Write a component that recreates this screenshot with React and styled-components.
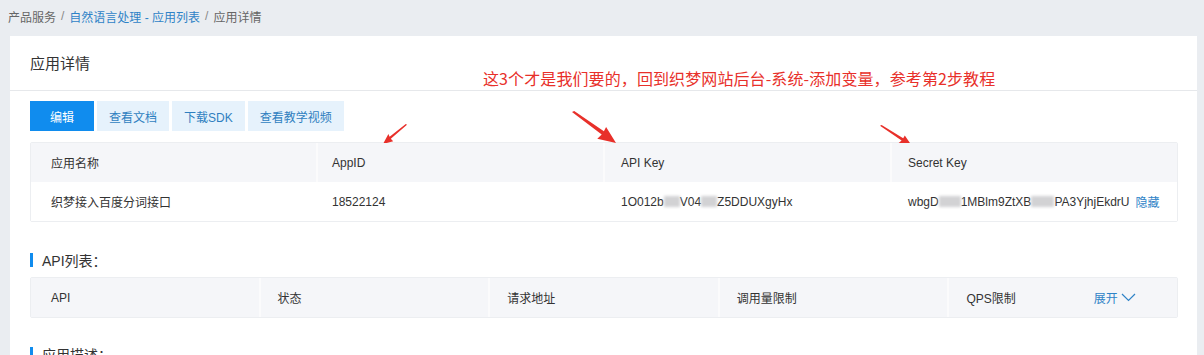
import React from "react";
import styled, { createGlobalStyle } from "styled-components";

const GlobalStyle = createGlobalStyle`
  html, body {
    margin: 0;
    padding: 0;
    background-color: #eaedf1;
    font-family: "Liberation Sans", "Noto Sans CJK SC", sans-serif;
    color: #333;
    overflow: hidden;
  }
  * {
    box-sizing: border-box;
  }
`;

const apiCols = ["API", "状态", "请求地址", "调用量限制", "QPS限制"];

export default function App() {
  return (
    <Page>
      <GlobalStyle />
      <Breadcrumb>
        <Crumb>产品服务</Crumb>
        <Sep>/</Sep>
        <CrumbLink>自然语言处理 - 应用列表</CrumbLink>
        <Sep>/</Sep>
        <Crumb>应用详情</Crumb>
      </Breadcrumb>
      <Card>
        <CardHeader>
          <CardTitle>应用详情</CardTitle>
        </CardHeader>
        <Note>这3个才是我们要的，回到织梦网站后台-系统-添加变量，参考第2步教程</Note>
        <Arrow $left={383} $top={124} $flip>
          <ArrowShape />
        </Arrow>
        <Arrow $left={572} $top={111} $w={44} $h={32}>
          <ArrowShape />
        </Arrow>
        <Arrow $left={880} $top={125} $w={32} $h={21}>
          <ArrowShape />
        </Arrow>
        <CardBody>
          <Toolbar>
            <Button $primary>编辑</Button>
            <Button>查看文档</Button>
            <Button>下载SDK</Button>
            <Button>查看教学视频</Button>
          </Toolbar>
          <InfoTable>
            <HeadRow $cols={4}>
              <HeadCell $pad={20}>应用名称</HeadCell>
              <HeadCell $pad={14}>AppID</HeadCell>
              <HeadCell $pad={16}>API Key</HeadCell>
              <HeadCell $pad={16}>Secret Key</HeadCell>
            </HeadRow>
            <DataRow $cols={4}>
              <DataCell $pad={20}>织梦接入百度分词接口</DataCell>
              <DataCell $pad={14}>18522124</DataCell>
              <DataCell $pad={16}>
                1O012b<Blur $w={16} />V04<Blur $w={16} />Z5DDUXgyHx
              </DataCell>
              <DataCell $pad={16}>
                wbgD<Blur $w={22} />1MBlm9ZtXB<Blur $w={23} />PA3YjhjEkdrU
                <TextLink>隐藏</TextLink>
              </DataCell>
            </DataRow>
          </InfoTable>
          <SectionTitle>API列表：</SectionTitle>
          <ApiTable>
            <HeadRow $cols={5}>
              {apiCols.map((c, i) => (
                <HeadCell key={c} $pad={i === 0 ? 20 : 17}>
                  {c}
                  {i === 4 && (
                    <Expand>
                      展开
                      <svg width="15" height="9" viewBox="0 0 15 9">
                        <path
                          d="M1 1 L7.5 7.5 L14 1"
                          fill="none"
                          stroke="#2f83c7"
                          strokeWidth="1.2"
                        />
                      </svg>
                    </Expand>
                  )}
                </HeadCell>
              ))}
            </HeadRow>
          </ApiTable>
          <SectionTitle $top={26}>应用描述：</SectionTitle>
          <Desc>织梦接入百度分词接口</Desc>
        </CardBody>
      </Card>
    </Page>
  );
}

function ArrowShape() {
  return (
    <svg width="100%" height="100%" viewBox="0 0 40 30" preserveAspectRatio="none">
      <polygon points="0,1 2,0 29,19 31,15 40,30 23,26 27,22" fill="#e8302a" />
    </svg>
  );
}

const Page = styled.div`
  width: 1204px;
  min-height: 355px;
  padding: 0 7px 0 10px;
`;

const Breadcrumb = styled.div`
  height: 36px;
  display: flex;
  align-items: center;
  gap: 5px;
  margin-left: -2px;
  padding-bottom: 4px;
  font-size: 12px;
`;

const Crumb = styled.span`
  color: #666;
`;

const CrumbLink = styled.span`
  color: #2f83c7;
`;

const Sep = styled.span`
  color: #888;
`;

const Card = styled.div`
  position: relative;
  background-color: #fff;
  min-height: 340px;
`;

const CardHeader = styled.div`
  height: 55px;
  display: flex;
  align-items: center;
  padding: 0 20px;
  border-bottom: 1px solid #e6e8eb;
`;

const CardTitle = styled.h2`
  margin: 0;
  font-size: 15px;
  font-weight: normal;
  color: #333;
  padding-bottom: 1px;
`;

const Note = styled.div`
  position: absolute;
  left: 473px;
  top: 30px;
  font-size: 16px;
  color: #e8302a;
  white-space: nowrap;
  font-family: "Noto Sans CJK SC", sans-serif;
  letter-spacing: 0.1px;
`;

const Arrow = styled.div`
  position: absolute;
  left: ${(p) => p.$left - 10}px;
  top: ${(p) => p.$top - 36}px;
  width: ${(p) => p.$w || 24}px;
  height: ${(p) => p.$h || 20}px;
  transform: ${(p) => (p.$flip ? "scaleX(-1)" : "none")};
  pointer-events: none;
`;

const CardBody = styled.div`
  padding: 10px 19px 0 20px;
`;

const Toolbar = styled.div`
  display: flex;
  gap: 3px;
`;

const Button = styled.button`
  height: 30px;
  min-width: 64px;
  padding: 0 12px;
  border: none;
  font-family: inherit;
  font-size: 12px;
  color: ${(p) => (p.$primary ? "#fff" : "#2f7fc0")};
  background-color: ${(p) => (p.$primary ? "#108cee" : "#e6f2fc")};
  cursor: pointer;
`;

const InfoTable = styled.div`
  margin-top: 11px;
  border: 1px solid #eceef1;
  border-radius: 2px;
`;

const ApiTable = styled(InfoTable)`
  margin-top: 7px;
`;

const HeadRow = styled.div`
  display: grid;
  grid-template-columns: repeat(${(p) => p.$cols}, 1fr);
  column-gap: 2px;
  background-color: #fbfbfc;
`;

const DataRow = styled.div`
  display: grid;
  grid-template-columns: repeat(${(p) => p.$cols}, 1fr);
  column-gap: 2px;
  background-color: #fff;
`;

const HeadCell = styled.div`
  position: relative;
  height: 39px;
  display: flex;
  align-items: center;
  padding-left: ${(p) => p.$pad}px;
  background-color: #f5f6f9;
  font-size: 12px;
  color: #333;
`;

const DataCell = styled.div`
  height: 39px;
  display: flex;
  align-items: center;
  padding-left: ${(p) => p.$pad}px;
  font-size: 12px;
  color: #333;
  white-space: nowrap;
`;

const Blur = styled.span`
  display: inline-block;
  width: ${(p) => p.$w}px;
  height: 11px;
  background-color: #d2d2d4;
  filter: blur(1.5px);
`;

const TextLink = styled.span`
  color: #2f83c7;
  margin-left: 6px;
`;

const Expand = styled.span`
  display: flex;
  align-items: center;
  gap: 3px;
  margin-left: 78px;
  color: #2f83c7;
`;

const SectionTitle = styled.div`
  margin-top: ${(p) => p.$top || 28}px;
  display: flex;
  align-items: center;
  gap: 9px;
  font-size: 14px;
  color: #333;
  &::before {
    content: "";
    width: 3px;
    height: 14px;
    background-color: #108cee;
  }
`;

const Desc = styled.div`
  margin-top: 10px;
  font-size: 12px;
  color: #666;
`;
